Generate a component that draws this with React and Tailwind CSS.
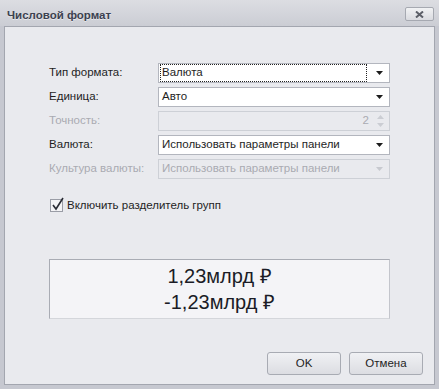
import React from "react";

const font = { fontFamily: '"Liberation Sans", Arial, sans-serif' };

function Arrow({ disabled }) {
  return (
    <svg width="7" height="4" viewBox="0 0 7 4" className="shrink-0">
      <polygon points="0,0 7,0 3.5,4" fill={disabled ? "#c7c9cf" : "#1c1c1c"} />
    </svg>
  );
}

function Field({ value, disabled, focus }) {
  return (
    <div
      className={`flex h-[20px] w-[232px] items-center border pl-[2px] pr-[4px] ${
        disabled ? "border-[#cdd0d6] bg-[#e9eaee] text-[#a9abb2]" : "border-[#b3b6be] bg-white text-[#1e1e1e]"
      }`}
    >
      <div className={`flex h-[16px] flex-1 items-center pl-[1px] ${focus ? "outline-1 outline-dotted outline-[#222]" : ""}`}>
        {value}
      </div>
      <div className="ml-[10px] mr-[2px]">
        <Arrow disabled={disabled} />
      </div>
    </div>
  );
}

function Row({ label, disabled, children }) {
  return (
    <div className="flex h-[20px] items-center">
      <div className={`w-[109px] ${disabled ? "text-[#a9abb2]" : "text-[#1e1e1e]"}`}>{label}</div>
      {children}
    </div>
  );
}

export default function App() {
  return (
    <div className="flex h-[389px] w-[439px] flex-col bg-[#c6c8d0] text-[11.5px]" style={font}>
      <div className="flex h-[26px] shrink-0 items-start justify-between bg-gradient-to-b from-[#dcdde2] to-[#cbcdd4] pl-[7px] pr-[5px]">
        <div className="mt-[7px] text-[11.5px] font-bold leading-[16px] text-[#3c4150] [text-shadow:0_1px_0_#ffffff80]">
          Числовой формат
        </div>
        <div className="mt-[7px] flex h-[14px] w-[29px] items-center justify-center rounded-[2px] border border-[#a6a9b1] bg-gradient-to-b from-[#f1f2f4] to-[#dadbe0]">
          <svg width="9" height="7" viewBox="0 0 9 7">
            <path d="M1 0.5 L8 6.5 M8 0.5 L1 6.5" stroke="#5c5f68" strokeWidth="2" />
          </svg>
        </div>
      </div>
      <div className="mx-[4px] mb-[4px] flex flex-1 flex-col border border-[#a3a6af] bg-[#e9eaee] pl-[44px] pr-[11px] pt-[36px]">
        <div className="flex flex-col gap-[4px]">
          <Row label="Тип формата:">
            <Field value="Валюта" focus />
          </Row>
          <Row label="Единица:">
            <Field value="Авто" />
          </Row>
          <Row label="Точность:" disabled>
            <div className="flex h-[20px] w-[232px] items-center justify-end border border-[#cdd0d6] bg-[#e9eaee] pr-[5px] text-[#a9abb2]">
              <span className="mr-[8px]">2</span>
              <div className="flex flex-col gap-[4px]">
                <svg width="7" height="4" viewBox="0 0 7 4">
                  <polygon points="0,4 7,4 3.5,0" fill="#cbcdd3" />
                </svg>
                <svg width="7" height="4" viewBox="0 0 7 4">
                  <polygon points="0,0 7,0 3.5,4" fill="#cbcdd3" />
                </svg>
              </div>
            </div>
          </Row>
          <Row label="Валюта:">
            <Field value="Использовать параметры панели" />
          </Row>
          <Row label="Культура валюты:" disabled>
            <Field value="Использовать параметры панели" disabled />
          </Row>
        </div>
        <div className="mt-[18px] flex items-center pl-[1px]">
          <div className="relative h-[13px] w-[13px] border border-[#9a9da6] bg-[#f4f4f6]">
            <svg width="14" height="14" viewBox="0 0 14 14" className="absolute -top-[3px] left-[0px]">
              <path d="M2 8 L5 12 L12 1" stroke="#2a2d35" strokeWidth="1.6" fill="none" />
            </svg>
          </div>
          <span className="ml-[4px] text-[#1e1e1e]">Включить разделитель групп</span>
        </div>
        <div className="mt-[45px] flex h-[60px] w-[341px] flex-col items-center justify-center border border-[#a9acb4] border-b-[#d4d6db] border-r-[#c3c5cc] bg-[#f4f4f7] text-[20px] leading-[26px] text-[#1b1c26]">
          <div>1,23млрд ₽</div>
          <div>-1,23млрд ₽</div>
        </div>
        <div className="mt-[33px] flex justify-end gap-[8px]">
          <button className="flex h-[23px] w-[74px] items-center justify-center rounded-[3px] border border-[#a8abb3] bg-gradient-to-b from-[#f0f1f4] to-[#dcdde2] text-[11.5px] text-[#1e1e1e]">
            OK
          </button>
          <button className="flex h-[23px] w-[74px] items-center justify-center rounded-[3px] border border-[#a8abb3] bg-gradient-to-b from-[#f0f1f4] to-[#dcdde2] text-[11.5px] text-[#1e1e1e]">
            Отмена
          </button>
        </div>
      </div>
    </div>
  );
}
